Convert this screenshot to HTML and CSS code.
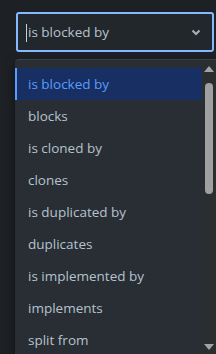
FILE: index.html
```html
<!DOCTYPE html>
<html lang="en">
<head>
  <meta charset="UTF-8" />
  <title>Link type</title>
  <link rel="stylesheet" href="styles.css">
</head>
<body>
  <div class="select">
    <span class="caret"></span>
    <span class="value">is blocked by</span>
    <svg class="chevron" width="10" height="7" viewBox="0 0 10 7">
      <path d="M1.5 1.5 L5 5 L8.5 1.5" fill="none" stroke="#9fadbc" stroke-width="2.2"/>
    </svg>
  </div>

  <div class="menu">
    <ul class="options">
      <li class="option selected">is blocked by</li>
      <li class="option">blocks</li>
      <li class="option">is cloned by</li>
      <li class="option">clones</li>
      <li class="option">is duplicated by</li>
      <li class="option">duplicates</li>
      <li class="option">is implemented by</li>
      <li class="option">implements</li>
      <li class="option">split from</li>
    </ul>
    <div class="scrollbar">
      <div class="arrow up"></div>
      <div class="thumb"></div>
      <div class="arrow down"></div>
    </div>
  </div>
</body>
</html>
```

FILE: styles.css
```css
* { margin: 0; padding: 0; box-sizing: border-box; }

html, body {
  height: 100%;
  overflow: hidden;
}

body {
  background: #1d2125;
  font-family: 'Open Sans', 'Noto Sans', sans-serif;
  font-size: 13.5px;
  color: #b6c2cf;
  padding-top: 12px;
}

.select {
  position: relative;
  display: flex;
  align-items: center;
  height: 40px;
  margin-left: 16px;
  margin-right: 2px;
  padding: 0 11px 0 10px;
  background: #22272b;
  border: 2px solid #85b8ff;
  border-radius: 3px;
}

.select .value {
  flex: 1;
  color: #b6c2cf;
}

.caret {
  position: absolute;
  left: 8px;
  top: 10px;
  width: 1px;
  height: 18px;
  background: #c7d1db;
}

.chevron { display: block; }

.menu {
  display: flex;
  height: 300px;
  margin-top: 7px;
  margin-left: 15px;
  background: #282e33;
  border-top: 1px solid #3a4147;
  border-radius: 4px 0 0 0;
  box-shadow: 0 4px 10px rgba(0, 0, 0, 0.5);
  overflow: hidden;
}

.options {
  flex: 1;
  list-style: none;
  padding-top: 8px;
}

.option {
  height: 32px;
  line-height: 32px;
  padding-left: 11px;
  border-left: 2px solid transparent;
  white-space: nowrap;
}

.option.selected {
  background: #172f62;
  border-left-color: #579dff;
  color: #579dff;
}

.scrollbar {
  width: 14px;
  display: flex;
  flex-direction: column;
  align-items: center;
  background: #2b2e30;
  padding-top: 6px;
}

.arrow {
  width: 0;
  height: 0;
  border-left: 5px solid transparent;
  border-right: 5px solid transparent;
}

.arrow.up { border-bottom: 6px solid #a3a3a3; }

.arrow.down {
  border-top: 6px solid #a3a3a3;
  margin-top: 150px;
}

.thumb {
  width: 8px;
  height: 111px;
  margin-top: 11px;
  margin-right: 1px;
  background: #a0a0a0;
  border-radius: 4px;
}
```
